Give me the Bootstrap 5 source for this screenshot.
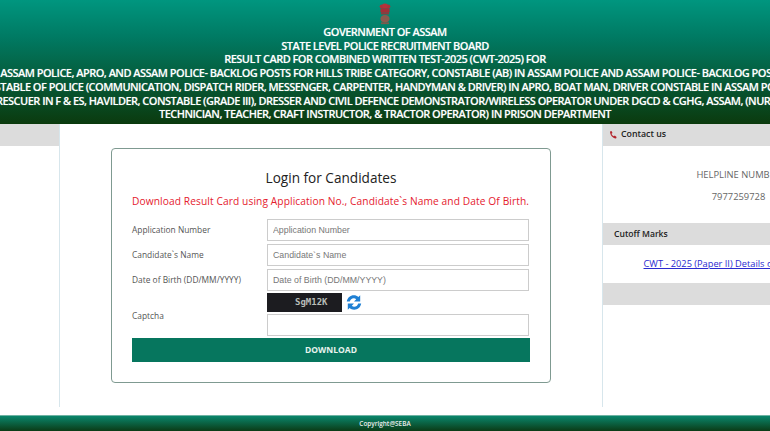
<!DOCTYPE html>
<html lang="en">
<head>
    <meta charset="UTF-8">
    <meta name="viewport" content="width=device-width, initial-scale=1.0">
    <title>Result Card</title>
    <link href="https://cdn.jsdelivr.net/npm/bootstrap@5.3.0/dist/css/bootstrap.min.css" rel="stylesheet">
    <style>
        html, body { height: 431px; overflow: hidden; }
        body { font-family: "Open Sans", "Liberation Sans", sans-serif; color: #444; background: #fff; }
        .site-head {
            height: 124px;
            padding-top: 3px;
            background: linear-gradient(#00967f, #007a63 30%, #0b3b0f);
            border-bottom: 1px solid #0a3a0c;
            color: #fff;
            font-size: 11px;
            font-weight: 600;
            line-height: 13.7px;
            letter-spacing: -0.53px;
            text-shadow: 0 0 1px rgba(255,255,255,.4);
        }
        .head-line { white-space: nowrap; display: flex; justify-content: center; }
        .emblem { display: block; margin: 0 auto; }
        .main-row { height: 283px; }
        .left-col { flex: 0 0 60px; border-right: 1px solid #d7e6ec; }
        .grey-bar { background: #dcdcdc; height: 22px; font-size: 8.8px; font-weight: 600; color: #222; }
        .center-col { flex: 0 0 542px; padding: 24px 0 0 51px; }
        .right-col { flex: 0 0 272px; border-left: 1px solid #d7e6ec; }
        .login-box {
            width: 440px;
            height: 235px;
            border: 1px solid #7f9a91;
            border-radius: 4px;
            padding: 17px 20px 0;
        }
        .login-title { font-size: 13.6px; font-weight: 400; color: #222; margin: 0 0 4px; line-height: 24px; }
        .login-note { font-size: 10.2px; color: #e5202e; margin: 0 0 8px; line-height: 15px; letter-spacing: .1px; white-space: nowrap; }
        .form-line { height: 25px; }
        .form-label-text { flex: 0 0 135px; font-size: 8.4px; color: #555; padding-top: 2px; }
        .captcha-label { padding-top: 4px; }
        .form-control.box-input {
            flex: 0 0 262px;
            width: 262px;
            height: 22px;
            min-height: 0;
            padding: 0 5px;
            border: 1px solid #ccc;
            border-radius: 0;
            font-family: "Liberation Sans", sans-serif;
            font-size: 8.8px;
        }
        .box-input::placeholder { color: #777; opacity: 1; }
        .captcha-block { padding-top: 1px; }
        .captcha-row { margin-bottom: 2px; }
        .captcha-img {
            width: 75px;
            height: 19px;
            background: #1c1c20;
            color: #b8bdb8;
            font-family: "DejaVu Sans Mono", monospace;
            font-size: 9px;
            font-weight: 700;
            line-height: 19px;
            padding-left: 28px;
        }
        .btn.download-btn {
            width: 398px;
            height: 24px;
            margin-top: 2px;
            padding: 0;
            border: 0;
            border-radius: 0;
            background: #06765e;
            color: #e8f3ee;
            font-size: 8.5px;
            font-weight: 700;
            display: block;
        }
        .helpline { height: 77px; padding-top: 23px; font-size: 9.4px; line-height: 12px; color: #666; }
        .helpline p { margin: 0 0 10px; }
        .contact-head { padding-left: 6px; }
        .cut-head { padding-left: 11px; font-size: 8.6px; }
        .cut-link { height: 38px; padding-top: 13px; font-size: 9.25px; line-height: 12px; }
        .cut-link a { color: #2a2ad0; white-space: nowrap; }
        .site-foot {
            height: 16px;
            margin-top: 8px;
            background: linear-gradient(#0a866c, #0b3b16);
            border-top: 1px solid #6fb3a3;
            color: #eee;
            font-size: 6.4px;
            font-weight: 600;
            line-height: 15px;
        }
    </style>
</head>
<body>
    <header class="site-head text-center overflow-hidden">
        <svg class="emblem" width="14" height="22" viewBox="0 0 14 25" preserveAspectRatio="none">
            <circle cx="4" cy="4" r="2.4" fill="#a8333a"/><circle cx="10" cy="4" r="2.4" fill="#a8333a"/><circle cx="7" cy="3.5" r="2.8" fill="#b5323a"/>
            <rect x="2.5" y="6" width="9" height="5" rx="1" fill="#a32f38"/>
            <rect x="3" y="11" width="8" height="2" fill="#8c3b3e"/>
            <ellipse cx="7" cy="18" rx="4.6" ry="4.4" fill="#8a5a4e"/>
            <rect x="3" y="22" width="8" height="2" fill="#7a5a4c"/>
        </svg>
        <div class="head-line">GOVERNMENT OF ASSAM</div>
        <div class="head-line">STATE LEVEL POLICE RECRUITMENT BOARD</div>
        <div class="head-line">RESULT CARD FOR COMBINED WRITTEN TEST-2025 (CWT-2025) FOR</div>
        <div class="head-line">CONSTABLE (UB) IN ASSAM POLICE, APRO, AND ASSAM POLICE- BACKLOG POSTS FOR HILLS TRIBE CATEGORY, CONSTABLE (AB) IN ASSAM POLICE AND ASSAM POLICE- BACKLOG POSTS FOR PLAIN TRIBE</div>
        <div class="head-line">CONSTABLE OF POLICE (COMMUNICATION, DISPATCH RIDER, MESSENGER, CARPENTER, HANDYMAN &amp; DRIVER) IN APRO, BOAT MAN, DRIVER CONSTABLE IN ASSAM POLICE,</div>
        <div class="head-line">&amp; RESCUER IN F &amp; ES, HAVILDER, CONSTABLE (GRADE III), DRESSER AND CIVIL DEFENCE DEMONSTRATOR/WIRELESS OPERATOR UNDER DGCD &amp; CGHG, ASSAM, (NURSE,</div>
        <div class="head-line">TECHNICIAN, TEACHER, CRAFT INSTRUCTOR, &amp; TRACTOR OPERATOR) IN PRISON DEPARTMENT</div>
    </header>

    <div class="main-row d-flex overflow-hidden">
        <aside class="left-col">
            <div class="grey-bar"></div>
        </aside>
        <main class="center-col">
            <div class="login-box">
                <h2 class="login-title text-center">Login for Candidates</h2>
                <p class="login-note">Download Result Card using Application No., Candidate`s Name and Date Of Birth.</p>
                <form>
                    <div class="form-line d-flex align-items-center">
                        <label class="form-label-text">Application Number</label>
                        <input class="form-control box-input" type="text" placeholder="Application Number">
                    </div>
                    <div class="form-line d-flex align-items-center">
                        <label class="form-label-text">Candidate`s Name</label>
                        <input class="form-control box-input" type="text" placeholder="Candidate`s Name">
                    </div>
                    <div class="form-line d-flex align-items-center">
                        <label class="form-label-text">Date of Birth (DD/MM/YYYY)</label>
                        <input class="form-control box-input" type="text" placeholder="Date of Birth (DD/MM/YYYY)">
                    </div>
                    <div class="d-flex align-items-center">
                        <label class="form-label-text captcha-label">Captcha</label>
                        <div class="captcha-block">
                            <div class="captcha-row d-flex align-items-center gap-1">
                                <div class="captcha-img">SgM12K</div>
                                <svg width="16" height="17" viewBox="0 0 16 16">
                                    <path d="M.8 7C1.400 3.200 4.300.8 7.800.8c1.800 0 3.400.6 4.600 1.700L14.200.7v6.200H8l2.200-2.200C9.500 4 8.700 3.700 7.800 3.700 5.800 3.700 4.300 5 3.800 7z" fill="#1f80d4"/>
                                    <path d="M15.200 9c-.6 3.800-3.500 6.200-7 6.200-1.800 0-3.400-.6-4.600-1.700l-1.800 1.800V9.100H8l-2.200 2.200c.7.700 1.500 1 2.400 1 2 0 3.500-1.300 4-3.300z" fill="#1f80d4"/>
                                </svg>
                            </div>
                            <input class="form-control box-input" type="text">
                        </div>
                    </div>
                    <button class="btn download-btn" type="button">DOWNLOAD</button>
                </form>
            </div>
        </main>
        <aside class="right-col">
            <div class="grey-bar contact-head d-flex align-items-center">
                <svg class="me-1" width="8" height="9" viewBox="0 0 8 9"><path d="M1 .5 2.500 0l1 2-1 .8c.3 1 1.200 2 2.300 2.500l1-.8L7.600 6l-.5 1.400C4 7.800 1 4 1 .5z" fill="#b3262e"/></svg>
                <span>Contact us</span>
            </div>
            <div class="helpline text-center">
                <p>HELPLINE NUMBER</p>
                <p>7977259728</p>
            </div>
            <div class="grey-bar cut-head d-flex align-items-center">Cutoff Marks</div>
            <div class="cut-link text-center"><a href="#">CWT - 2025 (Paper II) Details of Cutoff Marks</a></div>
            <div class="grey-bar"></div>
        </aside>
    </div>

    <footer class="site-foot text-center">Copyright@SEBA</footer>
    <script src="https://cdn.jsdelivr.net/npm/bootstrap@5.3.0/dist/js/bootstrap.bundle.min.js"></script>
</body>
</html>
